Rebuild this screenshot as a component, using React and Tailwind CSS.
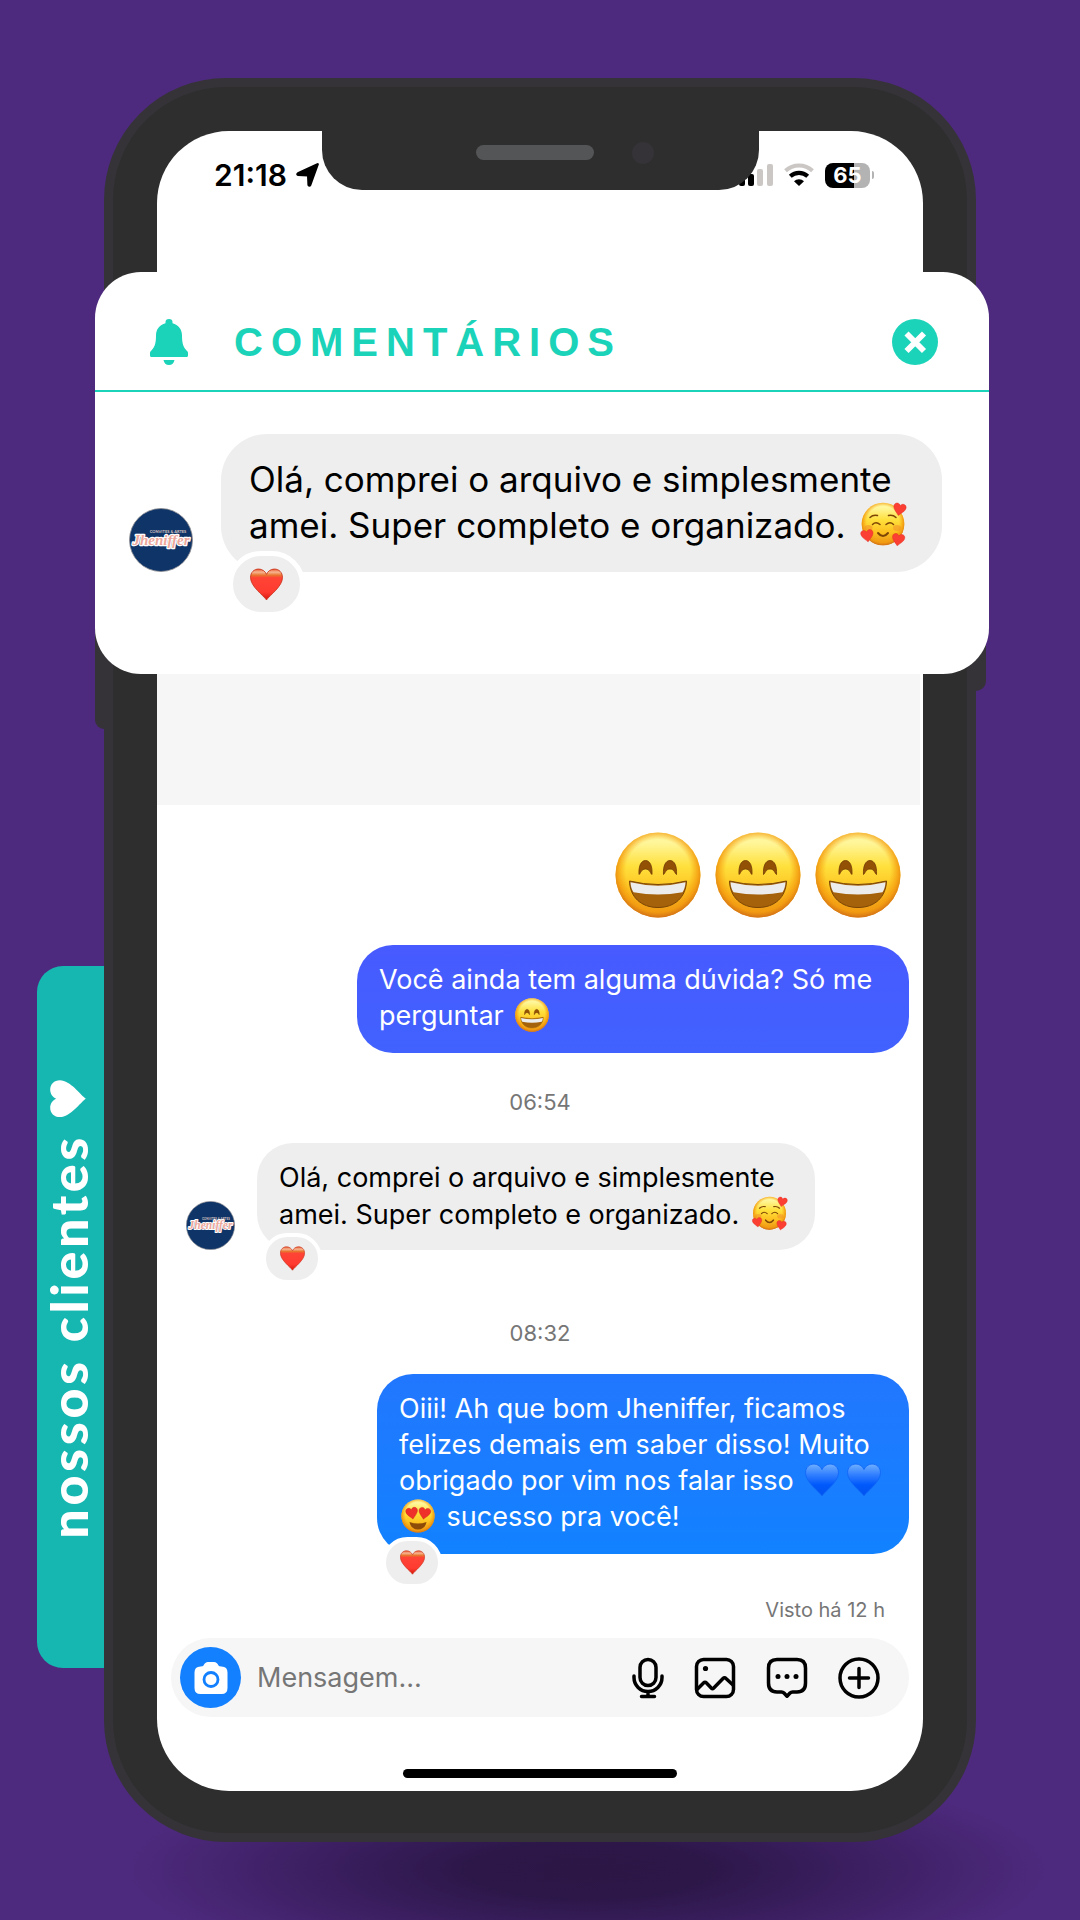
import React from "react";

const HEART =
  "M16 31C13 26.5.5 18 .5 9.2.5 4.2 4 1 8.4 1 12 1 15 3.4 16 6.2 17 3.4 20 1 23.6 1 28 1 31.5 4.2 31.5 9.2 31.5 18 19 26.5 16 31Z";

function Paints() {
  return (
    <svg className="absolute size-0" aria-hidden="true">
      <defs>
        <linearGradient id="face" x1="0" y1="0" x2="0" y2="1">
          <stop offset="0" stopColor="#fff8a0" />
          <stop offset="0.12" stopColor="#fff69a" />
          <stop offset="0.4" stopColor="#ffe03c" />
          <stop offset="0.7" stopColor="#fcc01f" />
          <stop offset="1" stopColor="#e88f18" />
        </linearGradient>
        <radialGradient id="rim" cx="0.5" cy="0.46" r="0.54">
          <stop offset="0.7" stopColor="#f7a512" stopOpacity="0" />
          <stop offset="0.88" stopColor="#f39b10" stopOpacity="0.85" />
          <stop offset="1" stopColor="#d27116" />
        </radialGradient>
        <linearGradient id="red" x1="0" y1="0" x2="0" y2="1">
          <stop offset="0" stopColor="#e8572f" />
          <stop offset="0.1" stopColor="#f7b592" />
          <stop offset="0.2" stopColor="#e8762f" />
          <stop offset="0.28" stopColor="#ff4436" />
          <stop offset="0.75" stopColor="#ff3b30" />
          <stop offset="1" stopColor="#d4160c" />
        </linearGradient>
        <linearGradient id="blue" x1="0" y1="0" x2="0" y2="1">
          <stop offset="0" stopColor="#6fb0ff" />
          <stop offset="0.35" stopColor="#2f7dff" />
          <stop offset="0.65" stopColor="#0059fb" />
          <stop offset="1" stopColor="#0052ee" />
        </linearGradient>
      </defs>
    </svg>
  );
}

function Grin({ className }) {
  return (
    <svg viewBox="0 0 86 86" className={className} role="img" aria-label="😄">
      <circle cx="43" cy="43" r="42.5" fill="url(#face)" />
      <circle cx="43" cy="43" r="42.5" fill="url(#rim)" />
      <g fill="#935106" stroke="#6e3a05" strokeWidth="0.8">
        <path d="M24 42.5C23.5 34 26 28.5 30.5 28.5S37.5 34 37 42.5C35.5 42 35 37 30.5 37S25.500 42 24 42.500Z" />
        <path d="M48.500 42.500C48 34 50.500 28.500 55 28.500S62 34 61.500 42.500C60 42 59.500 37 55 37S50 42 48.500 42.500Z" />
      </g>
      <path d="M14.500 49Q43 56 71.500 49C71 65 60 75.500 43 75.500S15 65 14.500 49Z" fill="#a5620b" stroke="#7a4405" strokeWidth="1" />
      <path d="M15.500 50.300Q43 57 70.500 50.300C70.300 54 69.500 57.500 67.500 60.200Q43 65 18.500 60.200C16.500 57.500 15.700 54 15.500 50.300Z" fill="#ececec" />
    </svg>
  );
}

function Adoring({ className }) {
  return (
    <svg viewBox="0 0 48 46" className={className} role="img" aria-label="🥰">
      <circle cx="24" cy="22" r="21.300" fill="url(#face)" />
      <circle cx="24" cy="22" r="21.300" fill="url(#rim)" />
      <g fill="#f0862b" opacity="0.45">
        <ellipse cx="9.500" cy="26" rx="4" ry="3" />
        <ellipse cx="38" cy="26" rx="4" ry="3" />
      </g>
      <g fill="none" stroke="#7d4606" strokeWidth="1.500" strokeLinecap="round">
        <path d="M11 15.500Q14 12.500 18.500 13.500" />
        <path d="M29.500 13.500Q34 12.500 37 15.500" />
        <path d="M13.500 22.500Q17 19 21 22.500" />
        <path d="M27 22.500Q31 19 34.500 22.500" />
        <path d="M19 31Q24 37 29 31" strokeWidth="2" />
      </g>
      <g fill="#fb3f33" stroke="#dd2b1f" strokeWidth="1">
        <path d={HEART} transform="translate(35.500 0) rotate(12) scale(.4)" />
        <path d={HEART} transform="translate(1 28.500) rotate(-8) scale(.4)" />
        <path d={HEART} transform="translate(34 30.500) rotate(10) scale(.4)" />
      </g>
    </svg>
  );
}

function HeartEyes({ className }) {
  return (
    <svg viewBox="0 0 34 34" className={className} role="img" aria-label="😍">
      <circle cx="17" cy="17" r="16.600" fill="url(#face)" />
      <circle cx="17" cy="17" r="16.600" fill="url(#rim)" />
      <g fill="#ee2f2a" stroke="#c71d17" strokeWidth="1">
        <path d={HEART} transform="translate(4 9.500) rotate(-10) scale(.38)" />
        <path d={HEART} transform="translate(18.500 7.500) rotate(10) scale(.38)" />
      </g>
      <path d="M8.500 23Q17 26 25.500 23C24.500 28 21.500 30.500 17 30.500S9.500 28 8.500 23Z" fill="#8d4c08" />
    </svg>
  );
}

function Heart({ className, fill = "url(#red)", stroke = "#c8321a", label = "❤️" }) {
  return (
    <svg viewBox="0 0 32 32" className={className} role="img" aria-label={label}>
      <path d={HEART} fill={fill} stroke={stroke} strokeWidth="0.800" />
    </svg>
  );
}

function Avatar({ className }) {
  return (
    <svg viewBox="0 0 64 64" className={className} role="img" aria-label="Jheniffer">
      <circle cx="32" cy="32" r="31.500" fill="#0f3467" stroke="#8b8b8f" strokeWidth="0.800" />
      <text x="39" y="25" textAnchor="middle" fontSize="4" fontWeight="700" fill="#d9c5c0" fontFamily="Lato, sans-serif">
        CONVITES &amp; ARTES
      </text>
      <text x="32" y="37" textAnchor="middle" fontSize="15" fontWeight="700" fontStyle="italic" fill="#eda79b" stroke="#fff" strokeWidth="2.400" strokeLinejoin="round" paintOrder="stroke" fontFamily="'Liberation Serif', serif">
        Jheniffer
      </text>
    </svg>
  );
}

function Reaction({ big = false }) {
  return (
    <div
      className={
        big
          ? "absolute -bottom-[45px] left-[7px] flex h-[66px] w-[77px] items-center justify-center rounded-full border-[5px] border-white bg-[#eeeeee]"
          : "absolute -bottom-[34px] left-[5px] flex h-[51px] w-[60px] items-center justify-center rounded-full border-4 border-white bg-[#eeeeee]"
      }
    >
      <Heart className={big ? "size-[33px]" : "size-[25px]"} />
    </div>
  );
}

function StatusBar() {
  return (
    <header className="relative flex h-[141px] items-start justify-between pt-[26px] pr-[49px] pl-[57px]">
      <div className="flex items-center gap-[9px] text-black">
        <time className="text-[30px] leading-[36px] font-semibold">21:18</time>
        <svg viewBox="0 0 24 24" className="size-6" aria-hidden="true">
          <path d="M22 1.500 14.600 22Q13.500 24 12.200 22L11.800 12.600 2 12.200Q0 11.500 1.800 10L20.800 1.200Q22.500.5 22 1.500Z" fill="#000" stroke="#000" strokeWidth="1.600" strokeLinejoin="round" />
        </svg>
      </div>
      <div className="flex h-[36px] items-center gap-[11px]">
        <svg viewBox="0 0 36 24" className="h-6 w-9" aria-hidden="true">
          <rect x="2" y="15" width="6" height="8" rx="2" />
          <rect x="11" y="11" width="6" height="12" rx="2" />
          <rect x="20" y="6" width="6" height="17" rx="2" fill="#cbc7c5" />
          <rect x="30" y="1" width="6" height="22" rx="2" fill="#cbc7c5" />
        </svg>
        <svg viewBox="0 0 30 24" className="h-6 w-[30px]" fill="none" aria-hidden="true">
          <path d="M1.500 7.700A20 20 0 0 1 28.500 7.700" stroke="#cbc7c5" strokeWidth="4" />
          <path d="M6.300 13.300A13 13 0 0 1 23.700 13.300" stroke="#000" strokeWidth="4.200" />
          <path d="M15 23 10 18.300A7 7 0 0 1 20 18.300Z" fill="#000" />
        </svg>
        <div className="flex items-center gap-0.5">
          <div className="flex h-[25px] w-[45px] items-center justify-center rounded-lg bg-linear-to-r from-black from-65% to-[#b3b3b3] to-65% text-[22px] leading-none font-bold text-white">
            65
          </div>
          <div className="h-2 w-0.5 rounded-r-full bg-[#b3b3b3]" />
        </div>
      </div>
      <div className="absolute top-0 right-[164px] left-[165px] h-[59px] rounded-b-[40px] bg-[#2e2e2e]">
        <div className="mt-[14px] ml-[154px] h-[15px] w-[118px] rounded-full bg-[#545557]" />
        <div className="absolute top-[11px] right-[105px] size-[22px] rounded-full bg-[#353338]" />
      </div>
    </header>
  );
}

function CommentsCard() {
  return (
    <section className="relative -mr-[66px] -ml-[62px] h-[402px] rounded-[46px] bg-white">
      <div className="flex h-[120px] items-center border-b-2 border-[#1bd3b9] pt-6 pr-[51px] pb-0.5 pl-[55px]">
        <svg viewBox="0 0 38 46" className="h-[46px] w-[38px] shrink-0" fill="#1bd3b9" aria-hidden="true">
          <path d="M15.500 3Q15.500 0 19 0T22.500 3V4.300C28.500 5.800 32 10.500 32 16.500 32 25 33.500 28.500 37.500 32.500Q38.300 33.500 38 36.500 38 38 36.500 38H1.500Q0 38 0 36.500-.3 33.500.5 32.500C4.500 28.500 6 25 6 16.500 6 10.500 9.500 5.800 15.500 4.300ZM13.500 41H24.500C24 44 22 46 19 46S14 44 13.500 41Z" />
        </svg>
        <h1 className="ml-[46px] flex-1 font-['Liberation_Sans',sans-serif] text-[40px] leading-[46px] font-bold tracking-[0.2em] text-[#1bd3b9]">
          COMENTÁRIOS
        </h1>
        <button type="button" aria-label="Fechar" className="flex size-[46px] items-center justify-center rounded-full bg-[#1bd3b9]">
          <svg viewBox="0 0 46 46" className="size-[46px]" aria-hidden="true">
            <path d="M14.500 14.500 32 32M32 14.500 14.500 32" stroke="#fff" strokeWidth="5.800" />
          </svg>
        </button>
      </div>
      <div className="flex items-end pt-[42px] pr-[47px] pl-[34px]">
        <Avatar className="size-16 shrink-0" />
        <div className="relative ml-[28px] h-[138px] flex-1 rounded-[46px] bg-[#eeeeee] pt-[22px] pl-[28px] text-[35px] leading-[46px] whitespace-nowrap text-black">
          <p>
            Olá, comprei o arquivo e simplesmente
            <br />
            amei. Super completo e organizado. <Adoring className="ml-1 inline h-[46px] w-[48px] align-[-10px]" />
          </p>
          <Reaction big />
        </div>
      </div>
    </section>
  );
}

function Composer() {
  return (
    <form className="mt-[14px] mr-[14px] ml-[14px] flex h-[79px] items-center rounded-full bg-[#f6f6f7] pr-[29px] pl-[9px]" onSubmit={(e) => e.preventDefault()}>
      <button type="button" aria-label="Câmera" className="flex size-[61px] shrink-0 items-center justify-center rounded-full bg-[#1380ff]">
        <svg viewBox="0 0 34 32" className="h-8 w-[34px]" aria-hidden="true">
          <path d="M9.500 3.500Q11 0 14 0H20Q23 0 24.500 3.500 25 4.500 27.500 4.500 33.500 4.500 33.500 10.500V26Q33.500 32 27.500 32H6.500Q.5 32 .5 26V10.500Q.5 4.500 6.500 4.500 9 4.500 9.500 3.500Z" fill="#fff" />
          <circle cx="17" cy="17.500" r="7" fill="#fff" stroke="#1380ff" strokeWidth="2.800" />
        </svg>
      </button>
      <input type="text" aria-label="Mensagem" placeholder="Mensagem..." className="ml-[16px] h-[48px] min-w-0 flex-1 bg-transparent text-[27px] text-black outline-none placeholder:text-[#767676]" />
      <div className="flex items-center gap-[30px]">
        <button type="button" aria-label="Gravar áudio">
          <svg viewBox="0 0 32 42" className="h-[42px] w-8" fill="none" stroke="#000" strokeWidth="3.500" strokeLinecap="round" aria-hidden="true">
            <rect x="8" y="2.500" width="16" height="26" rx="8" />
            <path d="M2 19V20.500A14 14 0 0 0 30 20.500V19M16 34.500V39M9.500 39.500H22.500" />
          </svg>
        </button>
        <button type="button" aria-label="Enviar imagem">
          <svg viewBox="0 0 42 42" className="size-[42px]" fill="none" stroke="#000" strokeWidth="3.500" strokeLinecap="round" strokeLinejoin="round" aria-hidden="true">
            <rect x="2.500" y="2.500" width="37" height="37" rx="7" />
            <path d="M3.500 32 9.500 26Q11 24.500 12.500 26L17.500 31.200Q18.500 32.200 19.500 31.200L29 21.500Q30.500 20 32 21.500L39 28" />
            <circle cx="11.500" cy="11.500" r="2.600" fill="#000" stroke="none" />
          </svg>
        </button>
        <button type="button" aria-label="Respostas rápidas">
          <svg viewBox="0 0 42 42" className="size-[42px]" fill="none" stroke="#000" strokeWidth="3.500" strokeLinejoin="round" aria-hidden="true">
            <path d="M11 2.500H31Q39.500 2.500 39.500 11V26Q39.500 35 31 35H26.500Q25 35 24 36L21 39.200 18 36Q17 35 15.500 35H11Q2.500 35 2.500 26V11Q2.500 2.500 11 2.500Z" />
            <g fill="#000" stroke="none">
              <circle cx="12" cy="19.500" r="2.500" />
              <circle cx="21" cy="19.500" r="2.500" />
              <circle cx="30" cy="19.500" r="2.500" />
            </g>
          </svg>
        </button>
        <button type="button" aria-label="Mais">
          <svg viewBox="0 0 42 42" className="size-[42px]" fill="none" stroke="#000" strokeWidth="3.500" strokeLinecap="round" aria-hidden="true">
            <circle cx="21" cy="21" r="19" />
            <path d="M21 11.500V30.500M11.500 21H30.500" />
          </svg>
        </button>
      </div>
    </form>
  );
}

export default function App() {
  return (
    <div className="relative isolate min-h-screen overflow-hidden bg-[#4e2a7e] px-[104px] pt-[78px] pb-[78px] font-[Inter,sans-serif]">
      <Paints />
      <div className="absolute top-[1760px] right-[30px] left-[125px] -z-10 h-[220px] bg-[radial-gradient(closest-side,#2b1646_0%,#2c1748_25%,#3c1f62_60%,#4e2a7e_100%)]" />
      <aside className="absolute top-[966px] left-[37px] flex h-[702px] w-[67px] items-center justify-center rounded-l-[26px] bg-[#16b6b1] pr-[6px]">
        <p className="flex rotate-180 items-center gap-[16px] pt-[16px] font-[Lato,sans-serif] text-[52px] leading-[60px] font-black tracking-[0.07em] text-white [writing-mode:vertical-rl]">
          nossos clientes
          <svg viewBox="0 0 32 32" className="size-[38px]" role="img" aria-label="♥">
            <path d={HEART} fill="#fff" transform="rotate(90 16 16)" />
          </svg>
        </p>
      </aside>
      <main className="relative rounded-[122px] border-[9px] border-[#353338] bg-[#2e2e2e] px-[44px] pt-[44px] pb-[42px]">
        <div className="absolute top-[500px] -left-[18px] h-[142px] w-[9px] rounded-l-[10px] bg-[#353338]" />
        <div className="absolute top-[500px] -right-[19px] h-[104px] w-[10px] rounded-r-[10px] bg-[#353338]" />
        <div className="rounded-[72px] bg-white pb-[13px]">
          <StatusBar />
          <CommentsCard />
          <div className="mr-[3px] h-[131px] bg-[#f6f6f6]" />

          <div className="flex justify-end gap-[14px] pt-[27px] pr-[22px]">
            <Grin className="size-[86px]" />
            <Grin className="size-[86px]" />
            <Grin className="size-[86px]" />
          </div>

          <div className="mt-[27px] mr-[14px] ml-auto h-[108px] w-[552px] rounded-[36px] bg-linear-to-b from-[#475aff] to-[#4162ff] pt-[17px] pl-[22px] text-[27px] leading-[36px] whitespace-nowrap text-white">
            Você ainda tem alguma dúvida? Só me
            <br />
            perguntar <Grin className="ml-1 inline size-[34px] align-[-7px]" />
          </div>

          <time className="mt-[35px] block text-center text-[22px] leading-[28px] text-[#767676]">06:54</time>

          <div className="mt-[27px] ml-[29px] flex items-end">
            <Avatar className="size-[49px] shrink-0" />
            <div className="relative ml-[22px] h-[107px] w-[558px] rounded-[36px] bg-[#eeeeee] pt-[17px] pl-[22px] text-[27px] leading-[36px] whitespace-nowrap text-black">
              Olá, comprei o arquivo e simplesmente
              <br />
              amei. Super completo e organizado. <Adoring className="ml-1 inline h-[36px] w-[37px] align-[-8px]" />
              <Reaction />
            </div>
          </div>

          <time className="mt-[69px] block text-center text-[22px] leading-[28px] text-[#767676]">08:32</time>

          <div className="relative mt-[27px] mr-[14px] ml-auto h-[180px] w-[532px] rounded-[36px] bg-linear-to-b from-[#2177ff] to-[#1182ff] pt-[17px] pl-[22px] text-[27px] leading-[36px] whitespace-nowrap text-white">
            Oiii! Ah que bom Jheniffer, ficamos
            <br />
            felizes demais em saber disso! Muito
            <br />
            obrigado por vim nos falar isso{" "}
            <span className="ml-1 inline-flex gap-2 align-[-7px]">
              <Heart className="size-[34px]" fill="url(#blue)" stroke="#0f66f5" label="💙" />
              <Heart className="size-[34px]" fill="url(#blue)" stroke="#0f66f5" label="💙" />
            </span>
            <br />
            <HeartEyes className="mr-1 ml-0.5 inline size-[34px] align-[-7px]" /> sucesso pra você!
            <Reaction />
          </div>

          <p className="mt-[42px] pr-[38px] text-right text-[20px] leading-[28px] text-[#767676]">Visto há 12 h</p>

          <Composer />
          <div className="mx-auto mt-[52px] h-[9px] w-[274px] rounded-full bg-black" />
        </div>
      </main>
    </div>
  );
}
